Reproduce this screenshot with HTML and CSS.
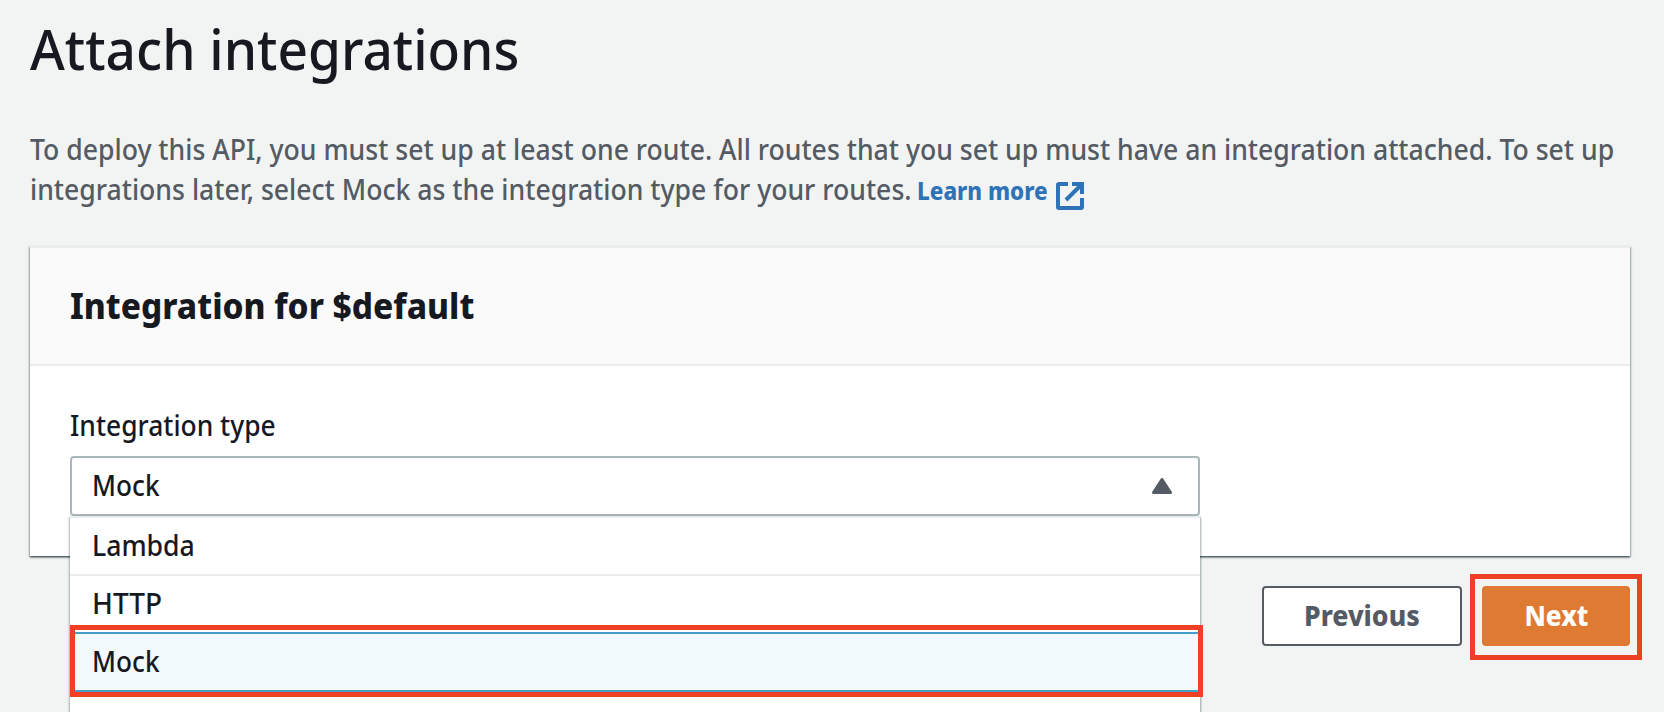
FILE: index.html
```html
<!DOCTYPE html>
<html lang="en">
<head>
<meta charset="utf-8">
<title>Attach integrations</title>
<link rel="stylesheet" href="styles.css">
</head>
<body>
<main class="page">
  <h1 class="title"><span class="narrow">Attach integrations</span></h1>
  <p class="intro"><span class="line"><span class="narrow">To deploy this API, you must set up at least one route. All routes that you set up must have an integration attached. To set up</span></span>
    <span class="line"><span class="narrow line-two">integrations later, select Mock as the integration type for your routes.</span><a class="learn" href="#"><span class="narrow learn-text">Learn more</span><svg class="external" viewBox="0 0 28 28" width="28" height="28" aria-hidden="true"><path d="M12 2H3Q2 2 2 3V25Q2 26 3 26H25Q26 26 26 25V16M16 2H26V12M25 3L10 18" fill="none" stroke="currentColor" stroke-width="4"/></svg></a></span></p>
  <section class="card">
    <header class="card-header"><h2 class="card-title"><span class="narrow heavy">Integration for $default</span></h2></header>
    <div class="card-body">
      <div class="label"><span class="narrow">Integration type</span></div>
      <div class="select">
        <div class="trigger"><span class="narrow mock">Mock</span><svg class="caret" viewBox="0 0 20 16" width="20" height="16" aria-hidden="true"><path d="M10 1.5L18.5 14.5H1.5Z" fill="currentColor" stroke="currentColor" stroke-width="3" stroke-linejoin="round"/></svg></div>
        <div class="menu">
          <div class="option"><span class="narrow">Lambda</span></div>
          <div class="option http-option"><span class="narrow http">HTTP</span></div>
          <div class="option selected"><span class="narrow mock">Mock</span></div>
          <div class="highlight"></div>
        </div>
      </div>
    </div>
  </section>
  <footer class="actions">
    <button class="button previous"><span class="narrow">Previous</span></button>
    <button class="button next"><span class="narrow">Next</span></button>
  </footer>
</main>
</body>
</html>
```
FILE: styles.css
```css
* { box-sizing: border-box; }
body { margin: 0; height: 712px; overflow: hidden; background: #f2f4f3; color: #16191f; font-family: "Noto Sans", "Open Sans", sans-serif; font-size: 28px; font-weight: 500; }
.page { padding: 14px 34px 0 30px; height: 712px; overflow: hidden; }
.narrow { display: inline-block; transform: translateY(-1px) scaleX(.95); transform-origin: left center; white-space: nowrap; }
.title { margin: 0; font-size: 56px; font-weight: 500; line-height: 70px; }
.intro { margin: 46px 0 0; color: #545b64; line-height: 40px; }
.line { display: flex; white-space: nowrap; height: 40px; }
.line-two { margin-right: -46px; }
.learn { display: flex; margin-left: 5px; color: #2e73b8; font-weight: 800; font-size: 24px; text-decoration: none; }
.learn-text { width: 131px; transform: translateY(1px) scaleX(.935); }
.external { margin: 12px 0 0 8px; }
.card { margin-top: 36px; height: 310px; background: #fff; border-top: 2px solid #eaeded; box-shadow: 0 1px 1px 0 rgba(0,28,36,.35), 0 2px 2px 0 rgba(0,28,36,.25), 1px 1px 2px 0 rgba(0,28,36,.25), -1px 1px 2px 0 rgba(0,28,36,.25); }
.card-header { height: 118px; padding: 36px 40px 0; background: #fafafa; border-bottom: 2px solid #eaeded; }
.card-title { margin: 0; font-size: 36px; line-height: 46px; }
.heavy { font-weight: 800; transform: translateY(-1px) scaleX(.928); }
.card-body { padding: 40px 40px 0; }
.label { height: 50px; line-height: 41px; }
.label .narrow { transform: translateY(-1px) scaleX(.943); }
.select { position: relative; width: 1130px; }
.trigger { display: flex; justify-content: space-between; align-items: center; height: 60px; padding: 0 26px 0 20px; border: 2px solid #aab7b8; border-radius: 4px; background: #fff; }
.caret { color: #545b64; }
.mock { transform: translateY(-1px) scaleX(.935); }
.http { transform: translateY(-1px); }
.menu { position: absolute; top: 60px; left: 0; width: 1130px; height: 220px; background: #fff; border-top: 2px solid #eaeded; box-shadow: 1px 1px 2px rgba(0,28,36,.35), -1px 1px 2px rgba(0,28,36,.3); }
.option { height: 58px; padding: 0 22px; line-height: 56px; border-bottom: 2px solid #eaeded; }
.http-option { height: 56px; border-bottom: 0; }
.selected { height: 60px; line-height: 56px; background: #f2fafd; border: solid #449fca; border-width: 2px 0; }
.highlight { position: absolute; top: 107px; left: 0; width: 1133px; height: 72px; border: 5px solid #ee4024; }
.actions { display: flex; justify-content: flex-end; gap: 20px; margin-top: 30px; }
.button { position: relative; height: 60px; padding: 0; border: 2px solid #545b64; border-radius: 4px; background: #fff; color: #545b64; font: 800 28px/56px "Noto Sans", "Open Sans", sans-serif; }
.button .narrow { transform: translateY(-1px) scaleX(.95); transform-origin: center; }
.button.next .narrow { transform: translateY(-1px) scaleX(.93); }
.previous { width: 200px; }
.next { width: 148px; border-color: #df7a33; background: #df7a33; color: #fff; }
.next::after { content: ""; position: absolute; inset: -14px -14px -16px; border: 5px solid #ee4024; }
```
